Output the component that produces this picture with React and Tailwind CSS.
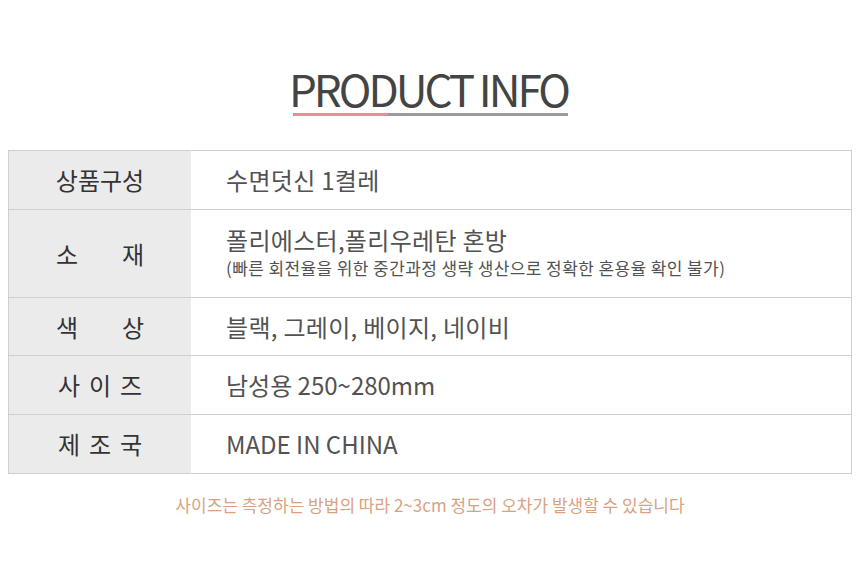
import React from "react";

const font = { fontFamily: '"Noto Sans CJK KR", "Noto Sans", sans-serif' };

function Row({ label, children, h }) {
  return (
    <div className={`flex border-b border-[#cfcfcf] last:border-b-0 ${h}`}>
      <div className="w-[182px] shrink-0 bg-[#ebebeb] flex items-center justify-center text-[24px] text-[#333] leading-none">
        {label}
      </div>
      <div className="flex-1 pl-[35px] flex flex-col justify-center text-[#525252]">
        {children}
      </div>
    </div>
  );
}

export default function App() {
  return (
    <div className="w-[860px] h-[574px] bg-white" style={font}>
      <div className="pt-[62px] flex flex-col items-center">
        <h1 className="text-[44px] leading-[52px] font-normal text-[#444] tracking-[-3px] pr-[3px]">PRODUCT INFO</h1>
        <div className="mt-[-1px] flex w-[275px] h-[3px]">
          <div className="w-[95px] bg-[#e88f96]" />
          <div className="flex-1 bg-[#9b9b9b]" />
        </div>
      </div>
      <div className="mx-[8px] mt-[34px] border border-[#cfcfcf]">
        <Row label="상품구성" h="h-[59px]">
          <span className="text-[24px] leading-none tracking-[0.3px]">수면덧신 1켤레</span>
        </Row>
        <Row label={<span className="flex w-[88px] justify-between"><span>소</span><span>재</span></span>} h="h-[88px]">
          <span className="text-[24px] leading-none mt-[-3px] tracking-[0.3px]">폴리에스터,폴리우레탄 혼방</span>
          <span className="text-[17px] leading-none mt-[7px] tracking-[0.4px]">(빠른 회전율을 위한 중간과정 생략 생산으로 정확한 혼용율 확인 불가)</span>
        </Row>
        <Row label={<span className="flex w-[88px] justify-between"><span>색</span><span>상</span></span>} h="h-[58px]">
          <span className="text-[24px] leading-none tracking-[0.3px]">블랙, 그레이, 베이지, 네이비</span>
        </Row>
        <Row label={<span className="flex w-[84px] justify-between"><span>사</span><span>이</span><span>즈</span></span>} h="h-[59px]">
          <span className="text-[24px] leading-none">남성용 250~280mm</span>
        </Row>
        <Row label={<span className="flex w-[84px] justify-between"><span>제</span><span>조</span><span>국</span></span>} h="h-[58px]">
          <span className="text-[24px] leading-none">MADE IN CHINA</span>
        </Row>
      </div>
      <p className="mt-[22px] text-center text-[17px] text-[#d8a283] leading-none">
        사이즈는 측정하는 방법의 따라 2~3cm 정도의 오차가 발생할 수 있습니다
      </p>
    </div>
  );
}
